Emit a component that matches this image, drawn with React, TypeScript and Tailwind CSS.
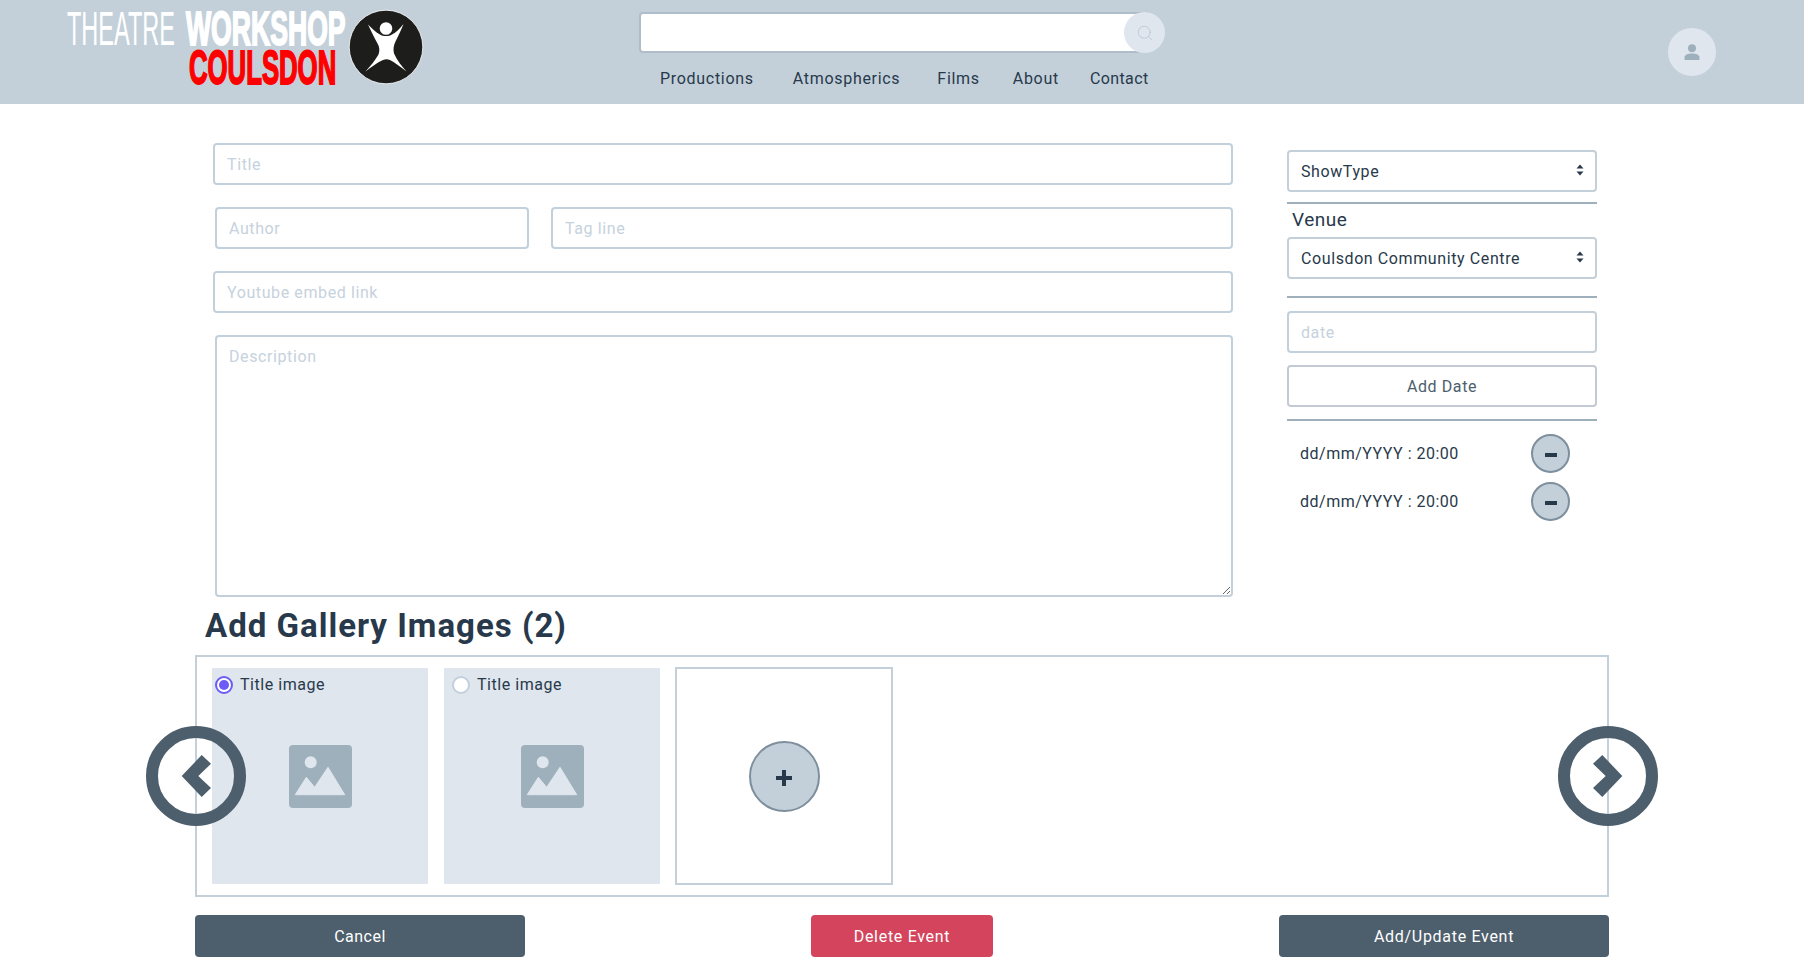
import React from "react";
import { Search } from "lucide-react";

const inputClass =
  "h-[42px] border-2 border-[#c3d0da] rounded-[4px] px-3 text-base tracking-[0.6px] text-[#27394a] placeholder:text-[#c6d2dd] outline-none bg-white";

const SelectArrows = () => (
  <svg
    className="absolute right-[13px] top-[14px] pointer-events-none"
    width="8"
    height="12"
    viewBox="0 0 8 12"
    fill="#27394a"
  >
    <path d="M4 0.5 7.5 4.5H0.5Z" />
    <path d="M4 11.5 0.5 7.5H7.5Z" />
  </svg>
);

const LogoBadge = () => (
  <svg width="76" height="76" viewBox="349 9.5 76 76">
    <circle cx="387" cy="47.5" r="36.8" fill="#1d1d1b" stroke="#fff" strokeWidth="0.8" />
    <circle cx="387" cy="29" r="6.3" fill="#fff" />
    <path
      d="M369 25 C373 29 377 33 381 35 C384 37 390 37 393 35 C397 33 401 29 404.5 24.5 C402 31 399 37 396.5 42 C394.5 46 394 50 395 54 C398 61 403 67 407.5 72 C402 68 396 63 391 60.5 C388.5 59.5 386.5 59.5 384 60.5 C378 63 372 68 366.5 72 C371 67 376 61 379.5 55 C381 51 380.5 47 378.5 44 C375 38 372 31 369 25Z"
      fill="#fff"
    />
  </svg>
);

const Logo = () => (
  <div className="flex items-start font-['Liberation_Sans',sans-serif]">
    <div className="w-[288px] pt-[12px]">
      <div className="flex pl-[7px] h-[34px] leading-[34px] text-[47.5px] text-white whitespace-nowrap">
        <span className="block w-[119px] shrink-0 origin-left scale-x-[0.495]">THEATRE</span>
        <span className="block w-[160px] shrink-0 origin-left scale-x-[0.56] font-bold [-webkit-text-stroke:2px_#fff]">
          WORKSHOP
        </span>
      </div>
      <div className="pl-[129px] h-[36px] leading-[36px] mt-[3px] text-[49px] font-bold text-[#ff0000] whitespace-nowrap">
        <span className="block w-[147px] origin-left scale-x-[0.525] [-webkit-text-stroke:2px_#ff0000]">
          COULSDON
        </span>
      </div>
    </div>
    <div className="mt-[9px]">
      <LogoBadge />
    </div>
  </div>
);

const ImagePlaceholder = () => (
  <svg width="63" height="63" viewBox="0 0 63 63">
    <rect width="63" height="63" rx="4" fill="#9fb0bd" />
    <circle cx="21.7" cy="17.3" r="6" fill="#dfe6ee" />
    <path
      d="M6.3 49.7 17.3 32.3 25.7 42.3 39 22.3 55.7 49.7Z"
      fill="#dfe6ee"
      stroke="#dfe6ee"
      strokeWidth="1"
      strokeLinejoin="round"
    />
  </svg>
);

const ArrowButton = ({ direction }: { direction: "left" | "right" }) => (
  <button
    className={`absolute top-[69px] w-[100px] h-[100px] ${
      direction === "left" ? "left-[-51px]" : "right-[-51px]"
    }`}
  >
    <svg width="100" height="100" viewBox="0 0 100 100">
      <circle cx="50" cy="50" r="44" fill="none" stroke="#4d5e6c" strokeWidth="12" />
      <path
        d={
          direction === "left"
            ? "M35.7 50 55.7 29 65 37.7 52.3 50 65 62 55.7 71Z"
            : "M64.3 50 44.3 29 35 37.7 47.7 50 35 62 44.3 71Z"
        }
        fill="#4d5e6c"
      />
    </svg>
  </button>
);

const GalleryTile = ({ checked, offset }: { checked: boolean; offset: string }) => (
  <div className="w-[216px] h-[216px] bg-[#dfe6ee] relative flex items-center justify-center shrink-0">
    <label className={`absolute top-[4px] flex items-center gap-[7px] text-base tracking-[0.55px] text-[#27394a] ${offset}`}>
      <span
        className={`w-[18px] h-[18px] rounded-full border-2 bg-white flex items-center justify-center ${
          checked ? "border-[#6c5cf5]" : "border-[#c3cfdb]"
        }`}
      >
        {checked && <span className="w-[10px] h-[10px] rounded-full bg-[#6c5cf5]" />}
      </span>
      <span className="mt-[1px]">Title image</span>
    </label>
    <ImagePlaceholder />
  </div>
);

const DateRow = () => (
  <div className="flex items-center h-[48px] pl-[13px]">
    <span className="text-base tracking-[0.5px] text-[#27394a] w-[231px]">dd/mm/YYYY : 20:00</span>
    <button className="w-[39px] h-[39px] mt-[-2px] rounded-full bg-[#c3d0da] border-2 border-[#7d8e9d] flex items-center justify-center">
      <span className="w-3 h-1 bg-[#27394a] mt-[3px]" />
    </button>
  </div>
);

const App = () => {
  return (
    <div className="w-full min-h-[972px] bg-white font-['Roboto',sans-serif] text-[#27394a]">
      <header className="h-[104px] bg-[#c3d0da] flex items-start">
        <div className="w-[639px] pl-[60px] shrink-0">
          <Logo />
        </div>
        <div className="w-[526px] shrink-0 pt-[12px]">
          <div className="relative h-[41px]">
            <input className="w-[511px] h-[41px] bg-white border-2 border-[#aebdc9] rounded-[4px] px-3 outline-none" />
            <button className="absolute right-0 top-0 w-[41px] h-[41px] rounded-full bg-[#dfe6ee] flex items-center justify-center">
              <Search size={18} strokeWidth={1} color="#b4c1cc" />
            </button>
          </div>
          <nav className="flex text-base tracking-[0.7px] text-[#27394a] mt-[14px] pl-[21px]">
            <a className="mr-[39px]">Productions</a>
            <a className="mr-[37px]">Atmospherics</a>
            <a className="mr-[33px]">Films</a>
            <a className="mr-[31px]">About</a>
            <a className="tracking-[0.4px]">Contact</a>
          </nav>
        </div>
        <button className="ml-auto mr-[88px] mt-[28px] w-[48px] h-[48px] rounded-full bg-[#dfe6ee] flex items-center justify-center">
          <svg width="16" height="16" viewBox="0 0 16 16" fill="#9fb0bd">
            <circle cx="8" cy="4.2" r="4" />
            <path d="M0.5 16V13.5C0.5 11 3.5 9.5 8 9.5S15.5 11 15.5 13.5V16Z" />
          </svg>
        </button>
      </header>

      <div className="flex pl-[213px] h-[493px]">
        <div className="w-[1020px] pt-[39px] flex flex-col gap-[22px] shrink-0">
          <input className={`${inputClass} w-full`} placeholder="Title" />
          <div className="flex pl-[2px] gap-[22px]">
            <input className={`${inputClass} w-[314px]`} placeholder="Author" />
            <input className={`${inputClass} w-[682px]`} placeholder="Tag line" />
          </div>
          <input className={`${inputClass} w-full`} placeholder="Youtube embed link" />
          <textarea
            className={`${inputClass} w-[1018px] h-[262px] ml-[2px] py-2`}
            placeholder="Description"
          />
        </div>
        <div className="w-[310px] ml-[54px] pt-[46px]">
          <div className="relative">
            <select className={`${inputClass} w-full appearance-none pt-[2px]`}>
              <option>ShowType</option>
            </select>
            <SelectArrows />
          </div>
          <hr className="border-0 h-[2px] bg-[#9fb0bd] mt-[10px]" />
          <div className="text-[19px] tracking-[0.5px] leading-[24px] pl-[5px] mt-[4px] mb-[5px]">Venue</div>
          <div className="relative">
            <select className={`${inputClass} w-full appearance-none pt-[2px]`}>
              <option>Coulsdon Community Centre</option>
            </select>
            <SelectArrows />
          </div>
          <hr className="border-0 h-[2px] bg-[#9fb0bd] mt-[17px]" />
          <input className={`${inputClass} w-full mt-[13px] block`} placeholder="date" />
          <button className="w-full h-[42px] mt-[12px] pt-[2px] border-2 border-[#c3cad5] rounded-[4px] text-base tracking-[0.6px] text-[#4d5e6c] block">
            Add Date
          </button>
          <hr className="border-0 h-[2px] bg-[#9fb0bd] mt-[12px] mb-[9px]" />
          <DateRow />
          <DateRow />
        </div>
      </div>

      <div className="ml-[195px] w-[1414px]">
        <h2 className="text-[33px] leading-[40px] font-bold tracking-[1px] text-[#27394a] ml-[10px] mt-[9px] mb-[9px]">
          Add Gallery Images (2)
        </h2>
        <div className="relative h-[242px] border-2 border-[#c3d0da] flex items-center gap-[16px] pl-[15px]">
          <GalleryTile checked offset="left-[3px]" />
          <GalleryTile checked={false} offset="left-[8px]" />
          <div className="w-[218px] h-[218px] ml-[-1px] border-2 border-[#c3d0da] flex items-center justify-center shrink-0">
            <button className="w-[71px] h-[71px] rounded-full bg-[#c3d0da] border-2 border-[#7d8e9d] flex items-center justify-center">
              <svg className="mt-[3px]" width="16" height="16" viewBox="0 0 16 16" fill="#27394a">
                <rect x="0" y="6" width="16" height="4" />
                <rect x="6" y="0" width="4" height="16" />
              </svg>
            </button>
          </div>
          <ArrowButton direction="left" />
          <ArrowButton direction="right" />
        </div>
        <div className="flex justify-between mt-[18px]">
          <button className="w-[330px] h-[42px] pt-[2px] rounded-[4px] bg-[#4d5e6c] text-white text-base tracking-[0.5px]">
            Cancel
          </button>
          <button className="w-[182px] h-[42px] pt-[2px] rounded-[4px] bg-[#d4445c] text-white text-base tracking-[0.7px]">
            Delete Event
          </button>
          <button className="w-[330px] h-[42px] pt-[2px] rounded-[4px] bg-[#4d5e6c] text-white text-base tracking-[0.7px]">
            Add/Update Event
          </button>
        </div>
      </div>
    </div>
  );
};

export default App;
